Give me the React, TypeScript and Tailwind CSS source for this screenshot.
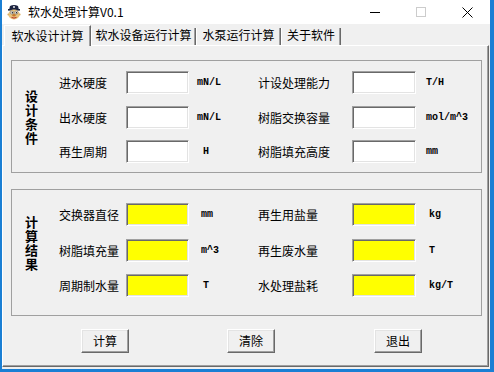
import React from "react";

type Row = {
  l: string;
  u: string;
  upl: string;
  r: string;
  ru: string;
  rpl: string;
  mt: string;
};

const group1: Row[] = [
  { l: "进水硬度", u: "mN/L", upl: "pl-[8px]", r: "计设处理能力", ru: "T/H", rpl: "pl-[10px]", mt: "" },
  { l: "出水硬度", u: "mN/L", upl: "pl-[8px]", r: "树脂交换容量", ru: "mol/m^3", rpl: "pl-[10px]", mt: "mt-[12px]" },
  { l: "再生周期", u: "H", upl: "pl-[14px]", r: "树脂填充高度", ru: "mm", rpl: "pl-[10px]", mt: "mt-[11px]" },
];

const group2: Row[] = [
  { l: "交换器直径", u: "mm", upl: "pl-[12px]", r: "再生用盐量", ru: "kg", rpl: "pl-[13px]", mt: "" },
  { l: "树脂填充量", u: "m^3", upl: "pl-[12px]", r: "再生废水量", ru: "T", rpl: "pl-[13px]", mt: "mt-[13px]" },
  { l: "周期制水量", u: "T", upl: "pl-[14px]", r: "水处理盐耗", ru: "kg/T", rpl: "pl-[13px]", mt: "mt-[12px]" },
];

function AppIcon() {
  return (
    <svg width="16" height="16" viewBox="0 0 16 16" className="shrink-0">
      <path d="M3 6 L4 2 Q8 0 12 2 L13 6 Z" fill="#1c2340" />
      <rect x="2" y="5" width="12" height="1.6" fill="#1c2340" />
      <circle cx="8" cy="3" r="0.9" fill="#ffffff" />
      <ellipse cx="8" cy="10.5" rx="5.6" ry="5" fill="#e9c37c" />
      <circle cx="6" cy="8.6" r="1.6" fill="#ffffff" stroke="#333" strokeWidth="0.4" />
      <circle cx="10.2" cy="8.6" r="1.6" fill="#ffffff" stroke="#333" strokeWidth="0.4" />
      <circle cx="6.3" cy="8.8" r="0.7" fill="#111" />
      <circle cx="10.4" cy="8.8" r="0.7" fill="#111" />
      <ellipse cx="8" cy="11.3" rx="1.6" ry="1.2" fill="#c4782e" />
      <path d="M5.5 13.4 Q8 14.8 10.5 13.4" stroke="#b02020" strokeWidth="0.9" fill="none" />
      <circle cx="2.4" cy="10.5" r="1" fill="#d9ae62" />
      <circle cx="13.6" cy="10.5" r="1" fill="#d9ae62" />
    </svg>
  );
}

function Field({ yellow, w }: { yellow?: boolean; w: string }) {
  return (
    <div
      className={
        "h-[23px] shrink-0 border border-t-[#a0a0a0] border-l-[#a0a0a0] border-b-white border-r-white shadow-[inset_1px_1px_0_#696969,inset_-1px_-1px_0_#e3e3e3] " +
        w +
        (yellow ? " bg-[#ffff00]" : " bg-white")
      }
    />
  );
}

function Group({
  title,
  rows,
  yellow,
  h,
  mt,
  titleMt,
  rowsPt,
}: {
  title: string;
  rows: Row[];
  yellow?: boolean;
  h: string;
  mt: string;
  titleMt: string;
  rowsPt: string;
}) {
  return (
    <div className={"ml-[8px] w-[471px] border border-[#a0a0a0] flex " + h + " " + mt}>
      <div className="w-[47px] shrink-0">
        <div
          className={
            "ml-[13px] w-[13px] text-[13px] font-bold leading-[13px] tracking-[1px] [writing-mode:vertical-rl] [text-orientation:upright] " +
            titleMt
          }
        >
          {title}
        </div>
      </div>
      <div className={"flex flex-col " + rowsPt}>
        {rows.map((r, i) => (
          <div key={i} className={"flex items-center h-[23px] " + r.mt}>
            <div className="w-[67px] text-[12px] leading-none whitespace-nowrap">{r.l}</div>
            <Field yellow={yellow} w="w-[63px]" />
            <div className={"w-[69px] text-[10px] leading-none font-bold font-['Liberation_Mono',monospace] " + r.upl}>
              {r.u}
            </div>
            <div className="w-[94px] text-[12px] leading-none whitespace-nowrap">{r.r}</div>
            <Field yellow={yellow} w="w-[64px]" />
            <div className={"text-[10px] leading-none font-bold font-['Liberation_Mono',monospace] whitespace-nowrap " + r.rpl}>
              {r.ru}
            </div>
          </div>
        ))}
      </div>
    </div>
  );
}

function Btn({ label, ml }: { label: string; ml: string }) {
  return (
    <div
      className={
        "w-[48px] h-[24px] flex items-center justify-center text-[12px] leading-none bg-[#f0f0f0] border border-t-white border-l-white border-b-[#696969] border-r-[#696969] shadow-[inset_-1px_-1px_0_#a0a0a0,inset_1px_1px_0_#e3e3e3] " +
        ml
      }
    >
      {label}
    </div>
  );
}

export default function App() {
  const tabs = [
    { t: "软水设计计算", w: "w-[87px]", sel: true },
    { t: "软水设备运行计算", w: "w-[105px]", sel: false },
    { t: "水泵运行计算", w: "w-[85px]", sel: false },
    { t: "关于软件", w: "w-[60px]", sel: false },
  ];
  return (
    <div className="w-[494px] h-[372px] bg-[#1a7fd4] flex pl-[2px] pr-[4px] pb-[3px] font-['Noto_Sans_CJK_SC','Noto_Sans',sans-serif] text-black">
      <div className="flex-1 flex flex-col bg-[#f0f0f0]">
        <div className="h-[24px] bg-white flex items-center shrink-0">
          <div className="ml-[4px] flex">
            <AppIcon />
          </div>
          <span className="ml-[6px] text-[12px] leading-none">软水处理计算V0.1</span>
          <div className="ml-auto flex h-full">
            <div className="w-[46px] flex items-center justify-center">
              <div className="w-[10px] h-px bg-black" />
            </div>
            <div className="w-[46px] flex items-center justify-center">
              <div className="w-[10px] h-[10px] border border-[#cccccc]" />
            </div>
            <div className="w-[46px] flex items-center justify-center">
              <svg width="11" height="11" viewBox="0 0 11 11">
                <path d="M0.5 0.5 L10.5 10.5 M10.5 0.5 L0.5 10.5" stroke="#000" strokeWidth="1" />
              </svg>
            </div>
          </div>
        </div>

        <div className="mt-[1px] h-[20px] flex items-end pl-[2px] shrink-0">
          {tabs.map((tb, i) => (
            <div
              key={i}
              className={
                "flex items-center justify-center text-[12px] leading-none whitespace-nowrap border-r border-r-[#696969] shadow-[inset_-1px_0_0_#a0a0a0] " +
                tb.w +
                (tb.sel
                  ? " relative z-10 -mb-px h-[21px] bg-[#f0f0f0] border-t border-l border-t-white border-l-white"
                  : " h-[17px] border-l border-l-white")
              }
            >
              <span className={tb.sel ? "" : "-mt-[4px]"}>{tb.t}</span>
            </div>
          ))}
        </div>

        <div className="flex-1 flex flex-col mb-[2px] mr-[1px] border border-t-white border-l-white border-r-[#696969] border-b-[#696969] shadow-[inset_-1px_-1px_0_#a0a0a0]">
          <Group
            title="设计条件"
            rows={group1}
            h="h-[113px]"
            mt="mt-[14px]"
            titleMt="mt-[29px]"
            rowsPt="pt-[10px]"
          />
          <Group
            title="计算结果"
            rows={group2}
            yellow
            h="h-[127px]"
            mt="mt-[16px]"
            titleMt="mt-[26px]"
            rowsPt="pt-[13px]"
          />
          <div className="flex mt-[13px]">
            <Btn label="计算" ml="ml-[78px]" />
            <Btn label="清除" ml="ml-[98px]" />
            <Btn label="退出" ml="ml-[99px]" />
          </div>
        </div>
      </div>
    </div>
  );
}
